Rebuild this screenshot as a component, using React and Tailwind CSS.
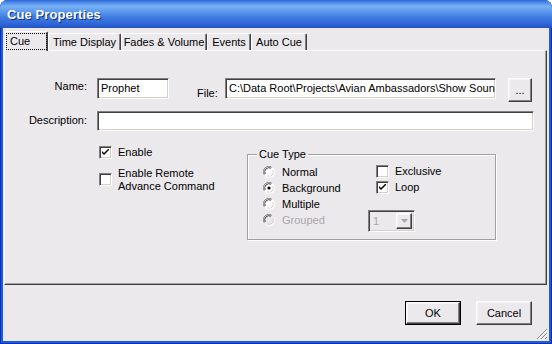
import React from "react";

const sunken =
  "border border-t-[#808080] border-l-[#808080] border-r-white border-b-white shadow-[inset_1px_1px_0_#404040,inset_-1px_-1px_0_#d4d0c8]";
const raised =
  "border border-t-white border-l-white border-r-[#404040] border-b-[#404040] shadow-[inset_-1px_-1px_0_#808080,inset_1px_1px_0_#f4f3f6]";

const Check = ({ checked }) => (
  <div className={`w-[13px] h-[13px] bg-white flex items-center justify-center ${sunken}`}>
    {checked && (
      <svg width="7" height="7" viewBox="0 0 7 7">
        <path d="M0 2 L0 4 L2 6 L7 1 L7 -1 L2 4 Z" fill="#000" />
      </svg>
    )}
  </div>
);

const Radio = ({ checked, disabled }) => (
  <svg width="12" height="12" viewBox="0 0 12 12" className="shrink-0">
    <circle cx="6" cy="6" r="5.5" fill={disabled ? "#ece9ed" : "#fff"} />
    <path d="M1.2 8.8 A5.5 5.5 0 0 1 8.8 1.2" stroke="#808080" strokeWidth="1" fill="none" />
    <path d="M2.2 8 A4.3 4.3 0 0 1 8 2.2" stroke="#404040" strokeWidth="1" fill="none" />
    <path d="M10.8 3.2 A5.5 5.5 0 0 1 3.2 10.8" stroke="#ffffff" strokeWidth="1" fill="none" />
    <path d="M9.8 4 A4.3 4.3 0 0 1 4 9.8" stroke="#d4d0c8" strokeWidth="1" fill="none" />
    {checked && <circle cx="6" cy="6" r="1.6" fill="#000" />}
  </svg>
);

const Tab = ({ label, w, active }) =>
  active ? (
    <div
      className="relative z-10 -mb-px h-[20px] bg-[#ece9ed] border-t border-l border-white border-r-[#404040] border-r rounded-t-[2px] shadow-[inset_-1px_0_0_#808080] flex items-center justify-center"
      style={{ width: w }}
    >
      <span className="px-[3px] leading-[15px] outline-1 outline-dotted outline-black w-[39px] text-left mt-[-1px]">{label}</span>
    </div>
  ) : (
    <div
      className="h-[17px] bg-[#ece9ed] border-t border-l border-white border-r border-r-[#404040] rounded-t-[2px] shadow-[inset_-1px_0_0_#808080] flex items-center justify-center leading-[14px]"
      style={{ width: w }}
    >
      {label}
    </div>
  );

const App = () => {
  return (
    <div className="w-[552px] h-[344px] flex flex-col rounded-t-[8px] overflow-hidden bg-[#1d5ae0] shadow-[inset_1px_0_0_#0a2fb0,inset_-1px_0_0_#0a2fb0,inset_0_-1px_0_#0a2fb0] font-['Liberation_Sans',Arial,sans-serif] text-[11px] text-black">
      <div className="h-[28px] shrink-0 px-[7px] flex items-center bg-[linear-gradient(180deg,#2f64d6_0%,#4a88ea_8%,#78b1f3_22%,#5e9bee_40%,#3f7ce2_62%,#2f66d6_85%,#2452c6_100%)]">
        <span className="text-white font-bold text-[13px] tracking-[0.1px] [text-shadow:1px_1px_0_#0f2f88] mt-[1px]">
          Cue Properties
        </span>
      </div>

      <div className="relative flex-1 mx-[3px] mb-[3px] bg-[#ece9ed] flex flex-col">
        {/* tabs */}
        <div className="h-[22px] flex items-end pl-[2px] shrink-0">
          <Tab label="Cue" w={43} active />
          <Tab label="Time Display" w={73} />
          <Tab label="Fades & Volume" w={86} />
          <Tab label="Events" w={44} />
          <Tab label="Auto Cue" w={56} />
        </div>

        {/* panel */}
        <div className="ml-[1px] mr-[2px] h-[235px] shrink-0 border-t border-l border-white border-r border-b border-r-[#404040] border-b-[#404040] shadow-[inset_-1px_-1px_0_#a0a0a0]">
          <div className="flex items-start pt-[27px]">
            <div className="w-[82px] text-right mt-[2px] leading-[13px]">Name:</div>
            <div className={`ml-[10px] w-[72px] h-[21px] bg-white px-[3px] flex items-center ${sunken}`}>Prophet</div>
            <div className="ml-[28px] w-[28px] mt-[9px] leading-[13px]">File:</div>
            <div className={`w-[271px] h-[21px] bg-white pl-[3px] flex items-center overflow-hidden whitespace-nowrap ${sunken}`}>
              {"C:\\Data Root\\Projects\\Avian Ambassadors\\Show Soun"}
            </div>
            <div className={`ml-[12px] w-[24px] h-[24px] bg-[#ece9ed] flex items-center justify-center leading-[10px] ${raised}`}>
              ...
            </div>
          </div>

          <div className="flex items-start mt-[9px]">
            <div className="w-[82px] text-right mt-[3px] leading-[13px]">Description:</div>
            <div className={`ml-[10px] w-[437px] h-[20px] bg-white ${sunken}`} />
          </div>

          <div className="flex items-start mt-[15px]">
            <div className="ml-[94px] w-[148px] flex flex-col">
              <div className="flex items-center h-[13px]">
                <Check checked />
                <span className="ml-[6px] leading-[13px]">Enable</span>
              </div>
              <div className="flex items-start mt-[14px]">
                <Check />
                <span className="ml-[6px] leading-[13px] mt-[-6px]">
                  Enable Remote
                  <br />
                  Advance Command
                </span>
              </div>
            </div>

            <div className="relative mt-[8px] w-[249px] h-[86px] border border-[#a0a0a0] shadow-[1px_1px_0_#fff,inset_1px_1px_0_#fff] flex pt-[9px] pl-[15px]">
              <span className="absolute left-[9px] -top-[7px] px-[2px] bg-[#ece9ed] leading-[13px]">Cue Type</span>
              <div className="w-[105px] flex flex-col">
                {[
                  ["Normal", false, false],
                  ["Background", true, false],
                  ["Multiple", false, false],
                  ["Grouped", false, true],
                ].map(([label, on, dis]) => (
                  <div key={label} className="h-[16px] flex items-center">
                    <Radio checked={on} disabled={dis} />
                    <span className={`ml-[7px] leading-[13px] ${dis ? "text-[#a7a6aa]" : ""}`}>{label}</span>
                  </div>
                ))}
              </div>
              <div className="flex flex-col -mt-[1px]">
                <div className="h-[16px] flex items-center ml-[8px]">
                  <Check />
                  <span className="ml-[6px] leading-[13px]">Exclusive</span>
                </div>
                <div className="h-[16px] flex items-center ml-[8px]">
                  <Check checked />
                  <span className="ml-[6px] leading-[13px]">Loop</span>
                </div>
                <div className={`mt-[15px] w-[47px] h-[22px] flex items-stretch p-[2px] ${sunken}`}>
                  <span className="flex-1 pl-[2px] text-[#a7a6aa] leading-[16px]">1</span>
                  <div className={`w-[16px] flex items-center justify-center ${raised}`}>
                    <svg width="7" height="4" viewBox="0 0 7 4">
                      <path d="M0 0 H7 L3.5 4 Z" fill="#a7a6aa" />
                    </svg>
                  </div>
                </div>
              </div>
            </div>
          </div>
        </div>

        {/* bottom buttons */}
        <div className="flex justify-end pt-[16px] pr-[17px] gap-[15px]">
          <div className="w-[56px] h-[24px] border border-black">
            <div className={`w-full h-full flex items-center justify-center ${raised}`}>OK</div>
          </div>
          <div className={`w-[56px] h-[24px] flex items-center justify-center ${raised}`}>Cancel</div>
        </div>

        <svg className="absolute right-[1px] bottom-[1px]" width="12" height="12" viewBox="0 0 12 12">
          <path d="M11 1 L1 11 M11 5 L5 11 M11 9 L9 11" stroke="#808080" strokeWidth="1" />
          <path d="M11 2 L2 11 M11 6 L6 11 M11 10 L10 11" stroke="#ffffff" strokeWidth="1" />
        </svg>
      </div>
    </div>
  );
};

export default App;
